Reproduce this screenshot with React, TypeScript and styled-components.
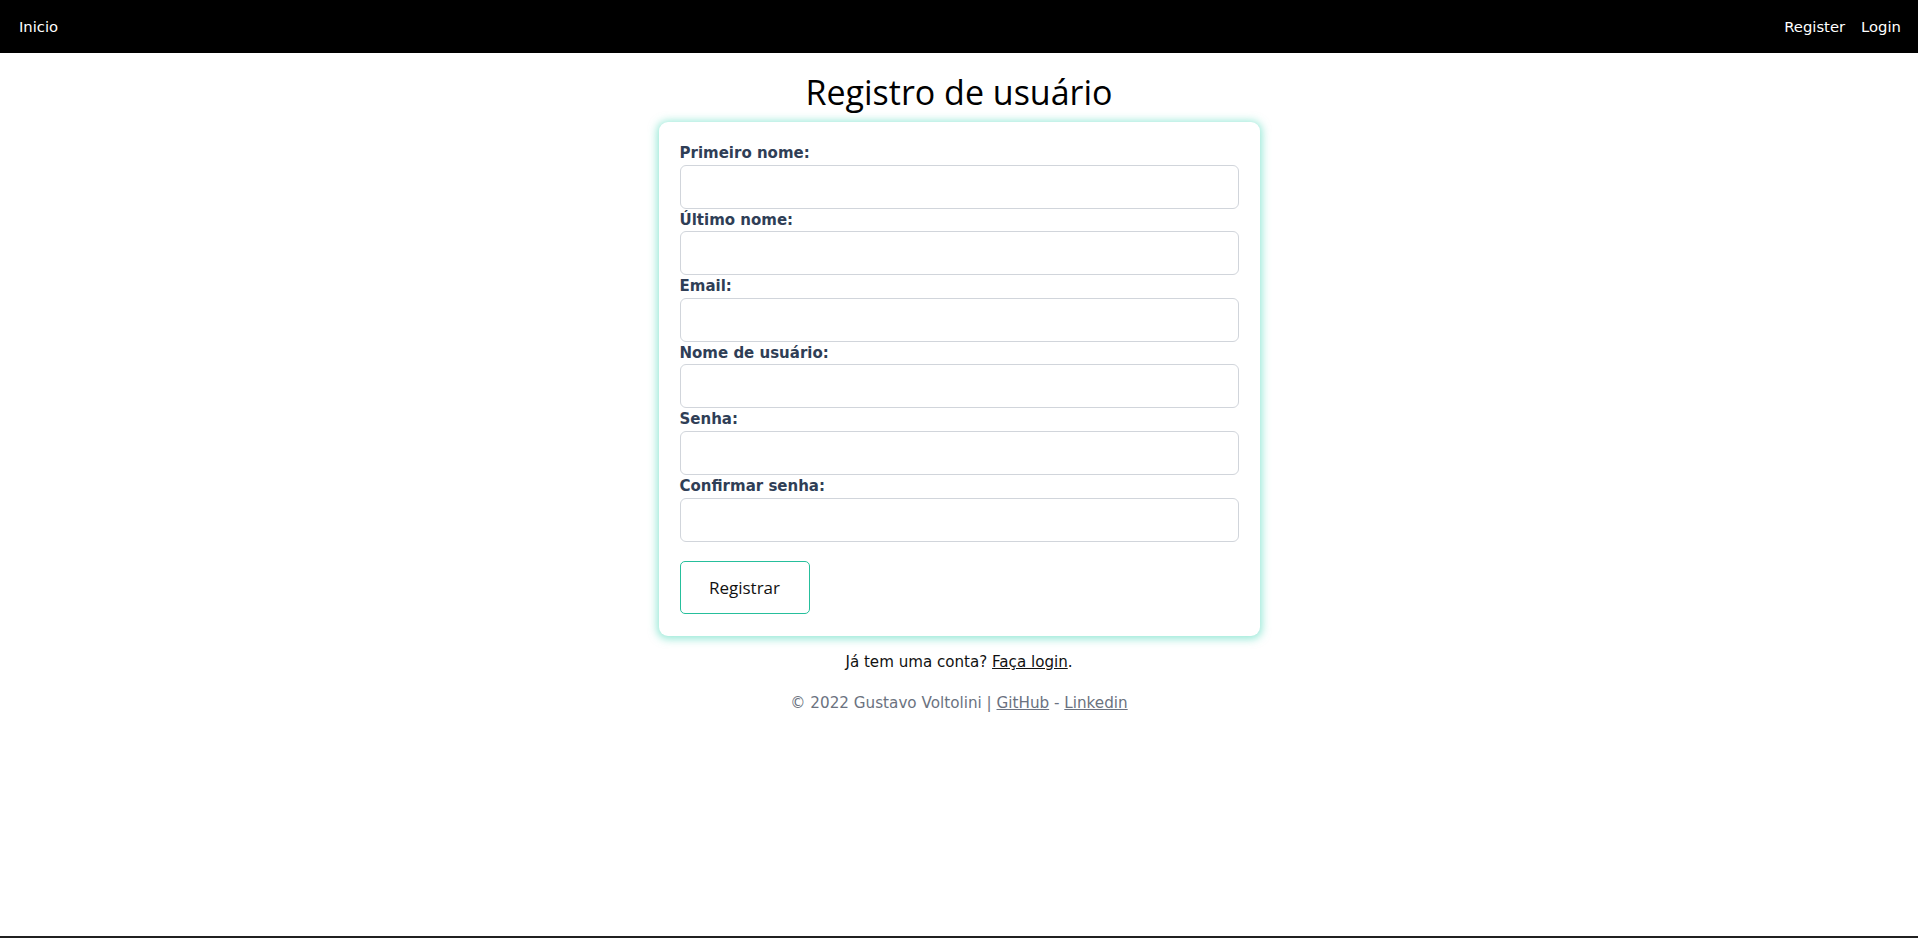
import React from "react";
import styled, { createGlobalStyle } from "styled-components";

const GlobalStyle = createGlobalStyle`
  * { box-sizing: border-box; }
  html, body { margin: 0; padding: 0; background: #ffffff; }
  body { font-family: "DejaVu Sans", Verdana, sans-serif; color: #111111; }
`;

const Page = styled.div`
  min-height: 100vh;
  display: flex;
  flex-direction: column;
`;

const NavBar = styled.nav`
  height: 53px;
  background: #000000;
  display: flex;
  align-items: center;
  justify-content: space-between;
  padding: 0 17px 0 19px;
`;

const NavGroup = styled.div`
  display: flex;
  align-items: center;
  gap: 16px;
`;

const NavLink = styled.a`
  color: #ffffff;
  font-family: "DejaVu Sans", Verdana, sans-serif;
  font-size: 14.8px;
  text-decoration: none;
  cursor: pointer;
`;

const Main = styled.main`
  display: flex;
  flex-direction: column;
  align-items: center;
`;

const Title = styled.h1`
  margin: 19px 0 10px;
  font-family: "Open Sans", "Noto Sans", sans-serif;
  font-weight: 400;
  font-size: 34px;
  line-height: 40px;
  color: #000000;
`;

const Card = styled.form`
  width: 601px;
  background: #ffffff;
  border-radius: 9px;
  padding: 20px 21px 22px;
  box-shadow: 0 1px 8px 2px rgba(64, 214, 180, 0.55);
  display: flex;
  flex-direction: column;
`;

const Field = styled.div`
  display: flex;
  flex-direction: column;
`;

const Label = styled.label`
  font-family: "DejaVu Sans", Verdana, sans-serif;
  font-weight: 700;
  font-size: 15px;
  line-height: 22.6px;
  color: #2f3e56;
`;

const Input = styled.input`
  height: 44px;
  width: 100%;
  border: 1px solid #d1d5db;
  border-radius: 6px;
  padding: 0 12px;
  font-size: 16px;
  background: #ffffff;
  outline: none;
`;

const SubmitButton = styled.button`
  align-self: flex-start;
  margin-top: 19.4px;
  width: 130px;
  height: 53px;
  background: #ffffff;
  border: 1px solid #26bf9c;
  border-radius: 5px;
  font-family: "Open Sans", "Noto Sans", sans-serif;
  font-size: 17px;
  color: #111111;
  cursor: pointer;
`;

const LoginHint = styled.p`
  margin: 14px 0 0;
  font-size: 15.1px;
  line-height: 24px;
  color: #111111;
`;

const HintLink = styled.a`
  color: #111111;
  text-decoration: underline;
  cursor: pointer;
`;

const Footer = styled.p`
  margin: 17px 0 0;
  font-size: 15.2px;
  line-height: 24px;
  color: #6b7280;
`;

const FooterLink = styled.a`
  color: #6b7280;
  text-decoration: underline;
  cursor: pointer;
`;

const BottomEdge = styled.div`
  margin-top: auto;
  height: 2px;
  background: #202020;
`;

const fields = [
  { id: "firstName", label: "Primeiro nome:", type: "text" },
  { id: "lastName", label: "Último nome:", type: "text" },
  { id: "email", label: "Email:", type: "email" },
  { id: "username", label: "Nome de usuário:", type: "text" },
  { id: "password", label: "Senha:", type: "password" },
  { id: "confirmPassword", label: "Confirmar senha:", type: "password" },
];

export default function App() {
  return (
    <Page>
      <GlobalStyle />
      <NavBar>
        <NavGroup>
          <NavLink>Inicio</NavLink>
        </NavGroup>
        <NavGroup>
          <NavLink>Register</NavLink>
          <NavLink>Login</NavLink>
        </NavGroup>
      </NavBar>
      <Main>
        <Title>Registro de usuário</Title>
        <Card onSubmit={(e) => e.preventDefault()}>
          {fields.map((f) => (
            <Field key={f.id}>
              <Label htmlFor={f.id}>{f.label}</Label>
              <Input id={f.id} type={f.type} />
            </Field>
          ))}
          <SubmitButton type="submit">Registrar</SubmitButton>
        </Card>
        <LoginHint>
          Já tem uma conta? <HintLink>Faça login</HintLink>.
        </LoginHint>
        <Footer>
          © 2022 Gustavo Voltolini | <FooterLink>GitHub</FooterLink> -{" "}
          <FooterLink>Linkedin</FooterLink>
        </Footer>
      </Main>
      <BottomEdge />
    </Page>
  );
}
